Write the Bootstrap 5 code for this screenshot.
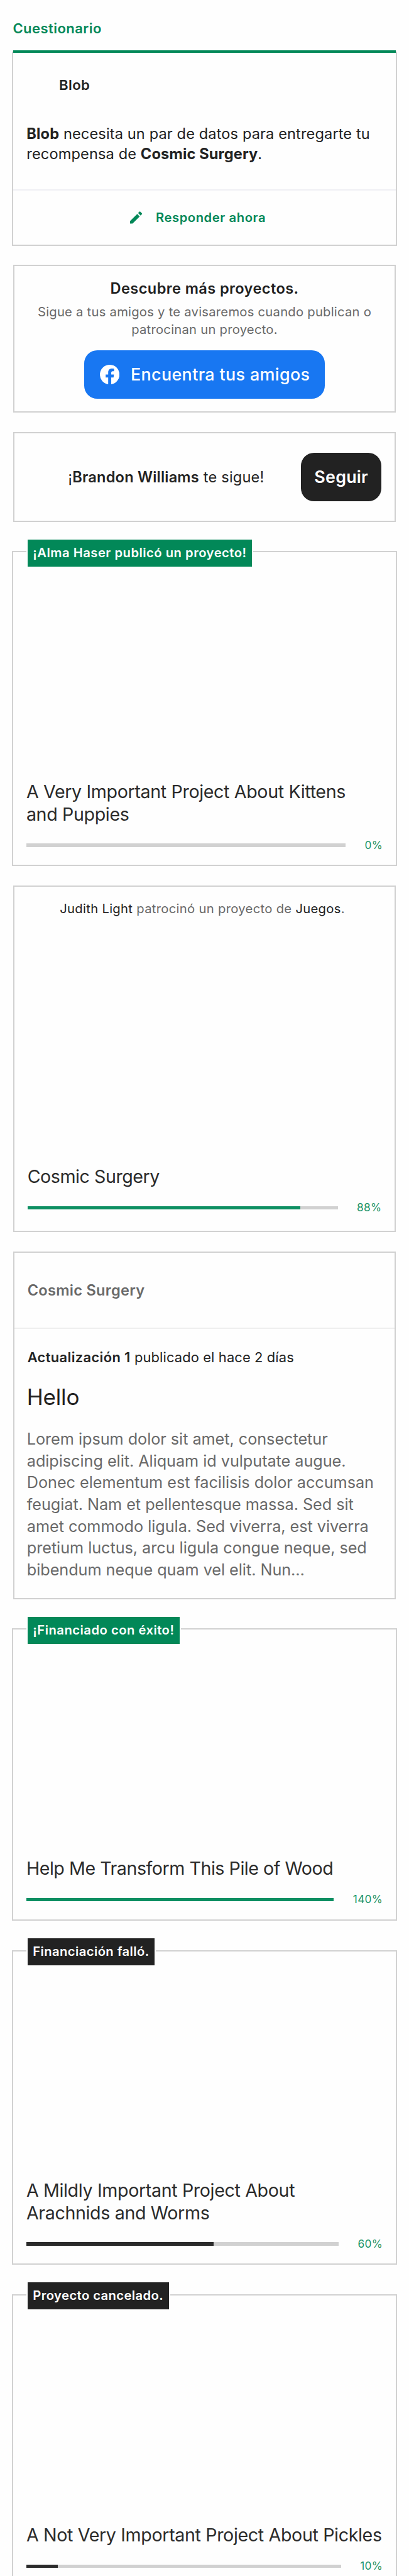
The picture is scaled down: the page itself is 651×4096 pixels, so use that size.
<!DOCTYPE html>
<html lang="es">
<head>
<meta charset="utf-8">
<meta name="viewport" content="width=device-width, initial-scale=1">
<title>Actividad</title>
<link rel="stylesheet" href="https://cdn.jsdelivr.net/npm/bootstrap@5.3.0/dist/css/bootstrap.min.css">
<style>
  :root { --green: #028858; --ink: #222; --soft: #696969; --line: #d1d1d1; }
  html { font-size: 8.678px; }
  body { font-family: Inter, "Liberation Sans", sans-serif; color: var(--ink); background: #fefefe; }
  .feed { height: 100vh; padding-top: 3.2rem; }
  .feed p, .feed h1, .feed h2 { margin: 0; }
  strong { font-weight: 600; }
  .green { color: var(--green); }
  .soft { color: var(--soft); }
  .ink { color: var(--ink); }
  .section-title { font-size: 2.54rem; line-height: 4rem; font-weight: 600; letter-spacing: .02em; padding-left: 2.35rem; }

  .tile { border: 2px solid var(--line); border-radius: 0; background: #fefefe; margin: 3.6rem 2.4rem 0; color: var(--ink); }
  .tile-wide { margin-left: 2.2rem; margin-right: 2.2rem; margin-top: 5.4rem; }

  .survey { height: 35.7rem; margin-top: 2.2rem; border-top: 0; }
  .survey::before { content: ""; position: absolute; top: -2px; left: 0; right: 0; height: 4px; background: var(--green); }
  .survey .creator { font-size: 2.55rem; line-height: 3.6rem; font-weight: 600; letter-spacing: .02em; padding: 4.4rem 0 0 8.4rem; }
  .survey .message { font-size: 2.72rem; line-height: 3.7rem; letter-spacing: .005em; padding: 5.26rem 2.4rem 4.64rem 2.45rem; }
  .survey .message strong { font-weight: 700; }
  .survey .reply { border-top: 2px solid #efeff4; font-size: 2.33rem; font-weight: 600; letter-spacing: .028em; padding-left: 21.4rem; gap: 2.5rem; }
  .pencil { width: 2.25rem; height: 2.25rem; }

  .friends { height: 27.1rem; margin-top: 3.4rem; padding-top: 2.4rem; }
  .friends h2 { font-size: 2.72rem; line-height: 3.4rem; font-weight: 600; letter-spacing: .0165em; margin-bottom: 1.04rem; }
  .friends p { font-size: 2.33rem; line-height: 3.2rem; letter-spacing: .0125em; margin-bottom: 2.25rem; }
  .action { height: 8.8rem; border: 0; border-radius: 2.4rem; font-size: 3.1rem; line-height: 1; color: #fff; padding: 0; }
  .action-fb { width: 44.2rem; background: #1877f2; font-weight: 500; letter-spacing: .0135em; gap: 2.05rem; padding-left: 2.9rem; }
  .action-fb svg { width: 3.6rem; height: 3.6rem; }
  .action-follow { width: 14.8rem; background: var(--ink); font-weight: 600; letter-spacing: .008em; }
  .follower { height: 16.4rem; padding: 0 2.4rem 0 9.85rem; }
  .follower p { font-size: 2.72rem; letter-spacing: .008em; }

  .project { height: 57.7rem; padding: 0 2.4rem 2.4rem 2.4rem; }
  .project-short { height: 53.5rem; }
  .project-cut { height: 51.7rem; padding-bottom: .7rem; border-bottom: 0; }
  .project-title { font-size: 3.3rem; line-height: 4.1rem; font-weight: 400; letter-spacing: -.0125em; color: #2b2b2b; }
  .project-short .project-title { letter-spacing: -.0165em; }
  .funding { height: 2.4rem; margin-top: 2.45rem; gap: 3.5rem; }
  .funding .progress { height: .6rem; border-radius: 0; background: #d1d1d1; }
  .funding .progress-bar { background: #0d8f62; }
  .funding .bar-dark { background: #2b2b2b; }
  .funding span { font-size: 2rem; line-height: 2.4rem; letter-spacing: .015em; color: #1d9569; }
  .flag { position: absolute; top: -2.4rem; left: 2.6rem; height: 4.95rem; padding: 0 1rem; font-size: 2.33rem; line-height: 4.95rem; font-weight: 600; letter-spacing: .0245em; color: #fff; background: var(--green); box-shadow: 0 0 0 2px #fefefe; white-space: nowrap; }
  .flag-dark { background: var(--ink); letter-spacing: .0205em; }

  .backing { height: 63.4rem; padding-bottom: 3rem; }
  .backing .who { font-size: 2.33rem; line-height: 2.8rem; letter-spacing: .0155em; padding: 2.65rem 0 0 5.95rem; white-space: nowrap; }
  .backing .project-title { letter-spacing: -.016em; }

  .update { height: 63.7rem; }
  .update .source { height: 14rem; border-bottom: 2px solid #efefef; font-size: 2.72rem; font-weight: 600; letter-spacing: .012em; padding-left: 2.4rem; }
  .update .entry { padding: 3.6rem 2.4rem 0 2.4rem; }
  .update .when { font-size: 2.52rem; line-height: 3.2rem; letter-spacing: .006em; }
  .update .when strong { letter-spacing: .018em; }
  .update h2 { font-size: 4.04rem; line-height: 5rem; font-weight: 400; letter-spacing: -.006em; margin: 3.24rem 0 3.12rem -.1rem; }
  .update .excerpt { font-size: 2.91rem; line-height: 4rem; letter-spacing: -.002em; margin-left: -.1rem; white-space: nowrap; }
</style>
</head>
<body>
<main class="feed overflow-hidden">
  <h1 class="section-title green">Cuestionario</h1>

  <section class="card tile tile-wide survey">
    <p class="creator">Blob</p>
    <p class="message"><strong>Blob</strong> necesita un par de datos para entregarte tu<br>recompensa de <strong>Cosmic Surgery</strong>.</p>
    <div class="reply green d-flex align-items-center flex-grow-1">
      <svg class="pencil" viewBox="0 0 22 22" fill="currentColor" aria-hidden="true"><path d="M0 17.6 12.9 4.8 17.3 9.2 4.5 22H0zM14.4 3.2 16.8.7Q17.6 0 18.3.7L21.4 3.8Q22.1 4.5 21.4 5.2L18.9 7.7z"/></svg>
      <span>Responder ahora</span>
    </div>
  </section>

  <section class="card tile friends text-center align-items-center">
    <h2>Descubre más proyectos.</h2>
    <p class="soft">Sigue a tus amigos y te avisaremos cuando publican o<br>patrocinan un proyecto.</p>
    <button class="action action-fb d-flex align-items-center" type="button">
      <svg viewBox="0 0 36 36" aria-hidden="true"><path fill="#fff" d="M36 18A18 18 0 1 0 15.2 35.8V23.2H10.6V18H15.2V14C15.2 9.5 17.9 7 22 7 24 7 26 7.35 26 7.35V11.8H23.7C21.5 11.8 20.8 13.2 20.8 14.6V18H25.8L25 23.2H20.8V35.8A18 18 0 0 0 36 18z"/></svg>
      <span>Encuentra tus amigos</span>
    </button>
  </section>

  <section class="card tile follower flex-row align-items-center justify-content-between">
    <p>¡<strong>Brandon Williams</strong> te sigue!</p>
    <button class="action action-follow" type="button">Seguir</button>
  </section>

  <article class="card tile tile-wide project justify-content-end">
    <span class="flag">¡Alma Haser publicó un proyecto!</span>
    <h2 class="project-title">A Very Important Project About Kittens<br>and Puppies</h2>
    <div class="funding d-flex align-items-center">
      <div class="progress flex-grow-1"><div class="progress-bar" style="width:0%"></div></div><span>0%</span>
    </div>
  </article>

  <article class="card tile project backing justify-content-between">
    <p class="who soft"><span class="ink">Judith Light</span> patrocinó un proyecto de <span class="ink">Juegos</span>.</p>
    <div>
      <h2 class="project-title">Cosmic Surgery</h2>
      <div class="funding d-flex align-items-center">
        <div class="progress flex-grow-1"><div class="progress-bar" style="width:88%"></div></div><span>88%</span>
      </div>
    </div>
  </article>

  <article class="card tile update">
    <div class="source soft d-flex align-items-center">Cosmic Surgery</div>
    <div class="entry">
      <p class="when"><strong>Actualización 1</strong> publicado el hace 2 días</p>
      <h2>Hello</h2>
      <p class="excerpt soft">Lorem ipsum dolor sit amet, consectetur<br>adipiscing elit. Aliquam id vulputate augue.<br>Donec elementum est facilisis dolor accumsan<br>feugiat. Nam et pellentesque massa. Sed sit<br>amet commodo ligula. Sed viverra, est viverra<br>pretium luctus, arcu ligula congue neque, sed<br>bibendum neque quam vel elit. Nun…</p>
    </div>
  </article>

  <article class="card tile tile-wide project project-short justify-content-end">
    <span class="flag">¡Financiado con éxito!</span>
    <h2 class="project-title">Help Me Transform This Pile of Wood</h2>
    <div class="funding d-flex align-items-center">
      <div class="progress flex-grow-1"><div class="progress-bar" style="width:100%"></div></div><span>140%</span>
    </div>
  </article>

  <article class="card tile tile-wide project justify-content-end">
    <span class="flag flag-dark">Financiación falló.</span>
    <h2 class="project-title">A Mildly Important Project About<br>Arachnids and Worms</h2>
    <div class="funding d-flex align-items-center">
      <div class="progress flex-grow-1"><div class="progress-bar bar-dark" style="width:60%"></div></div><span>60%</span>
    </div>
  </article>

  <article class="card tile tile-wide project project-cut justify-content-end">
    <span class="flag flag-dark">Proyecto cancelado.</span>
    <h2 class="project-title text-nowrap">A Not Very Important Project About Pickles</h2>
    <div class="funding d-flex align-items-center">
      <div class="progress flex-grow-1"><div class="progress-bar bar-dark" style="width:10%"></div></div><span>10%</span>
    </div>
  </article>
</main>
<script src="https://cdn.jsdelivr.net/npm/bootstrap@5.3.0/dist/js/bootstrap.bundle.min.js"></script>
</body>
</html>
